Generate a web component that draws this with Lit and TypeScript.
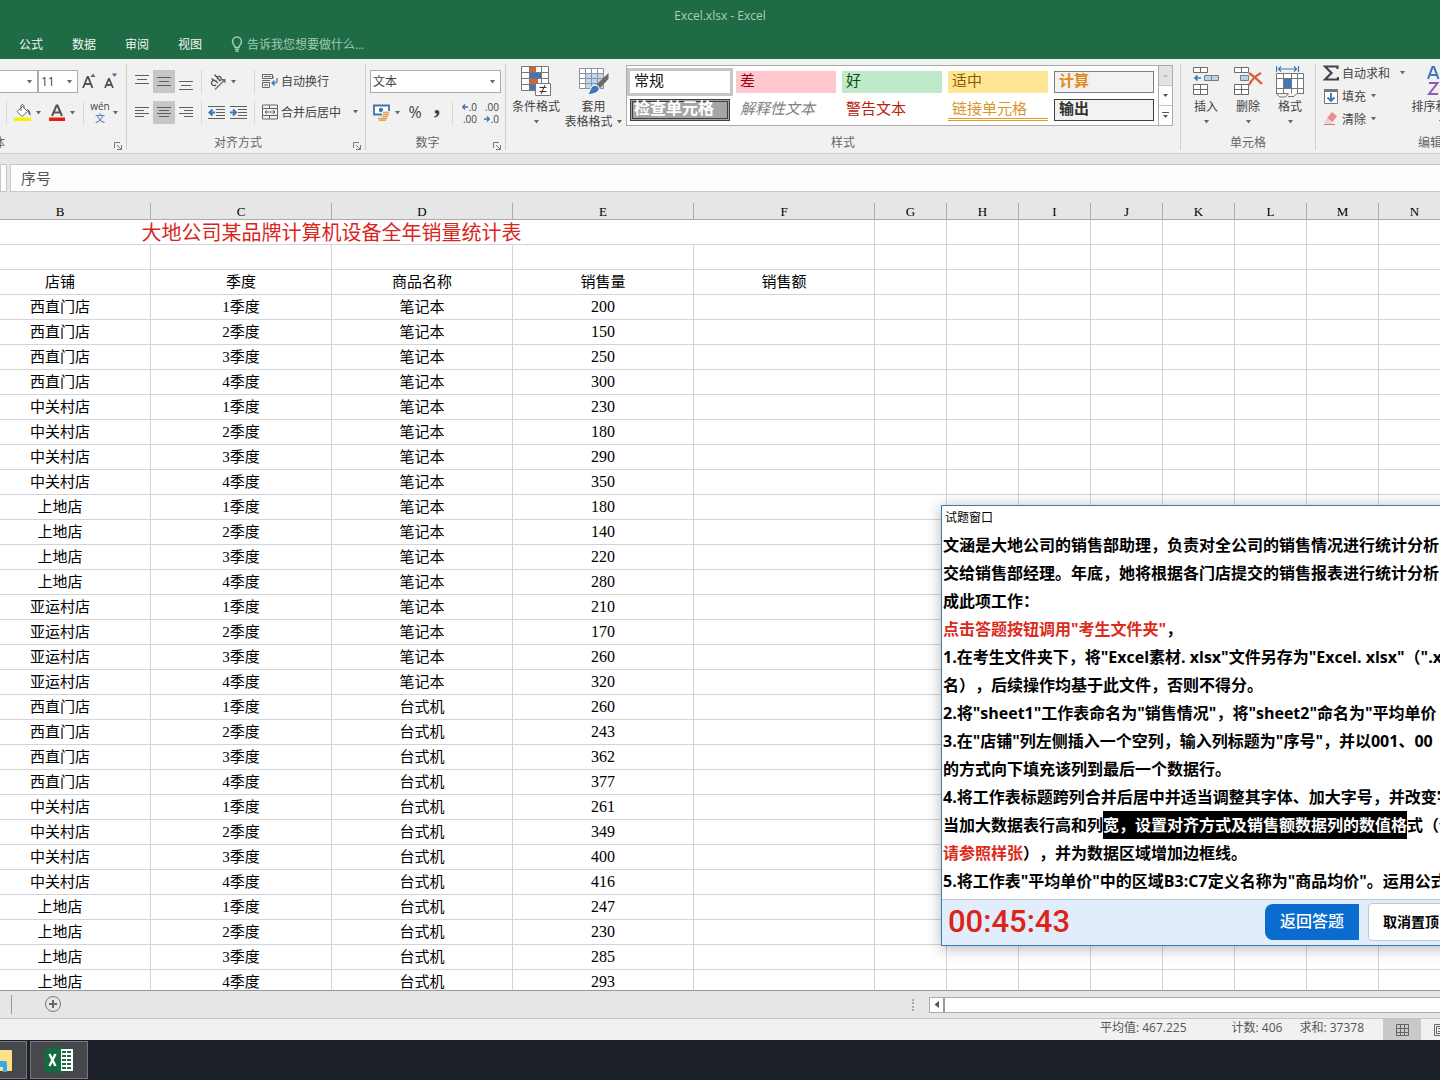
import { LitElement, html, css, svg, nothing } from "lit";
import { customElement } from "lit/decorators.js";
import { classMap } from "lit/directives/class-map.js";

const NAMES = ["B", "C", "D", "E", "F", "G", "H", "I", "J", "K", "L", "M", "N"];
const EXTRA = ["G", "H", "I", "J", "K", "L", "M", "N"];

const SHOPS = ["西直门店", "中关村店", "上地店", "亚运村店"];
const NOTEBOOK = [200, 150, 250, 300, 230, 180, 290, 350, 180, 140, 220, 280, 210, 170, 260, 320];
const DESKTOP = [260, 243, 362, 377, 261, 349, 400, 416, 247, 230, 285, 293];

const toRows = (product: string, amounts: number[]) =>
  amounts.map((n, i) => [SHOPS[Math.floor(i / 4)], `${(i % 4) + 1}季度`, product, String(n), ""]);

const ROWS: string[][] = [...toRows("笔记本", NOTEBOOK), ...toRows("台式机", DESKTOP)];

const STYLES = [
  ["常规", "normal"],
  ["差", "bad"],
  ["好", "good"],
  ["适中", "neutral"],
  ["计算", "calc"],
  ["检查单元格", "check"],
  ["解释性文本", "explain"],
  ["警告文本", "warn"],
  ["链接单元格", "linked"],
  ["输出", "output"],
];

const icon = (w: number, h: number, body: unknown) =>
  html`<svg width=${w} height=${h} viewBox="0 0 ${w} ${h}" fill="none" aria-hidden="true">${body}</svg>`;

const caret = html`<svg class="caret" width="7" height="4" viewBox="0 0 7 4" aria-hidden="true"><path d="M1 0h5L3.500 3.500z" fill="#666" /></svg>`;

const lines = (rows: number[][]) =>
  svg`<path d=${rows.map(([x1, x2, y]) => `M${x1} ${y}.5H${x2}`).join("")} stroke="#5f5f5f" />`;

const I = {
  bulb: icon(12, 16, svg`<path d="M4 11.500C4 9 1.500 8.500 1.500 5.500a4.500 4.500 0 0 1 9 0C10.500 8.500 8 9 8 11.500zM4 13.500h4M4.500 15.500h3" stroke="#a3cab4" stroke-width="1.500" />`),
  grow: icon(16, 18, svg`<path d="M2 15L6.500 4h.6L11.500 15M3.600 11h6.200" stroke="#555" stroke-width="1.900" /><path d="M9.500 4h5L12 .5z" fill="#41719c" />`),
  shrink: icon(16, 18, svg`<path d="M2 15L5.700 6h.5L10 15M3.300 12h5.200" stroke="#555" stroke-width="1.800" /><path d="M9 .5h5L11.500 4z" fill="#41719c" />`),
  bucket: icon(18, 18, svg`<path d="M0 13.500h17v3.500H0z" fill="#ffee00" /><path d="M3 7.500L8.500 2.500l5 5L8 12.500z" fill="#fff" stroke="#666" /><path d="M7 7V1.500q1.500-2 3 0V4" stroke="#666" /><path d="M13 5q4 1 3.500 6.500Q14.500 11 14 7.500z" fill="#4a6f9c" />`),
  fontColor: icon(18, 18, svg`<path d="M4 12L8.500 1.500h1L14 12M5.800 8.500h6.400" stroke="#555" stroke-width="2" /><path d="M1 13.500h16v3.500H1z" fill="#e2200f" />`),
  top: icon(14, 16, lines([[0, 14, 1], [2, 12, 5], [0, 14, 9]])),
  mid: icon(14, 16, lines([[0, 14, 3], [2, 12, 7], [0, 14, 11]])),
  bottom: icon(14, 16, lines([[0, 14, 7], [2, 12, 11], [0, 14, 15]])),
  left: icon(14, 16, lines([[0, 14, 2], [0, 9, 5], [0, 14, 8], [0, 9, 11]])),
  center: icon(14, 16, lines([[0, 14, 2], [2, 12, 5], [0, 14, 8], [2, 12, 11]])),
  right: icon(14, 16, lines([[0, 14, 2], [5, 14, 5], [0, 14, 8], [5, 14, 11]])),
  orient: icon(18, 18, svg`<path d="M6.500 7.500l2.200 2.500M6 7.500a2.600 2.600 0 1 0 1 4.200M6.800 8.500L2.500 5.500M5.500 1.500l5.500 6.500M8 4.500a2.300 2.300 0 1 1 3 3.300" stroke="#555" stroke-width="1.300" /><path d="M6 16.500L15 7.500" stroke="#777" stroke-width="1.400" /><path d="M12 6h4.500v4.500z" fill="#666" />`),
  outdent: icon(18, 16, svg`${lines([[0, 17, 1], [8, 17, 4], [8, 17, 7], [8, 17, 10], [0, 17, 13]])}<path d="M7 7.500H2M4.500 4.500l-3 3 3 3" stroke="#3d76b5" stroke-width="2" />`),
  indent: icon(18, 16, svg`${lines([[0, 17, 1], [8, 17, 4], [8, 17, 7], [8, 17, 10], [0, 17, 13]])}<path d="M0 7.500H5M3 4.500l3 3-3 3" stroke="#3d76b5" stroke-width="2" />`),
  wrap: icon(16, 16, svg`<path d="M.5 1.500h10v4H.5zM.5 9.500h7v5H.5zM0 7.500h8M2 3.500h7M2 12h4" stroke="#666" /><path d="M10 4.500h2M15 5v3.500q0 1.500-2 1.500h-3M12.500 7.500l-2.500 2.500 2.500 2.500" stroke="#3d76b5" stroke-width="1.300" />`),
  merge: icon(16, 16, svg`<path d="M.5 1h15v14H.5zM.5 4.500h15M.5 11.500h15M7.500 1v3.500M7.500 11.500V15" stroke="#666" /><path d="M3 8h10M5 6L3 8l2 2M11 6l2 2-2 2" stroke="#4f6b88" />`),
  money: icon(18, 17, svg`<path d="M1 1.500h15v9H1z" fill="#fff" stroke="#3f74ad" stroke-width="1.800" /><circle cx="8" cy="6" r="2.200" fill="#3f74ad" /><path d="M9 7h8v10H5v-4h4z" fill="#f1f1f1" /><path d="M10 8.500h6M10 10.500h6M9 12.500h6M5 14.500h9M6 16.300h7" stroke="#e6a55a" stroke-width="1.400" />`),
  condFmt: icon(30, 30, svg`<path d="M1 1h27v24H1z" fill="#fff" /><path d="M9 1h6v6H9zM9 13h8v6H9z" fill="#d0643c" /><path d="M9 7h11v6H9zM9 19h5v6H9z" fill="#4278b5" /><path d="M.5.5h27v24H.5zM.5 6.500h27M.5 12.500h27M.5 18.500h27M8.500.5v24M20.500.5v24" stroke="#777" /><path d="M14.500 17.500h15v12h-15z" fill="#fff" stroke="#777" /><path d="M18.500 21.500h7M18.500 25.500h7M24 19l-4 9" stroke="#333" />`),
  tableFmt: icon(30, 30, svg`<path d="M1 2h24v21H1z" fill="#fff" /><path d="M7 7h18v16H7z" fill="#c3d5ea" /><path d="M.5 2.500h24v20H.5zM.5 7.500h24M.5 12.500h24M.5 17.500h24M6.500 2.500v20M12.500 2.500v20M18.500 2.500v20" stroke="#8a94a0" /><path d="M29.500 7v6L21 22l-4-3z" fill="#6b6b6b" /><path d="M16 19q4 0 4.500 4Q18 29 7 28.500q4-1.500 4-4.500 1-4.500 5-5z" fill="#3f78b8" stroke="#fff" />`),
  insert: icon(28, 30, svg`<path d="M1.500 1.500h14v5h-14zM8.500 1.500v5M1.500 18.500h14v10h-14zM8.500 18.500v10M1.500 23.500h14" fill="#fff" stroke="#6b6b6b" /><path d="M12.500 9.500h14v5h-14zM19.500 9.500v5" fill="#bcd3e6" stroke="#6b7f90" /><path d="M9 12H3M5.500 9.500L3 12l2.500 2.500" stroke="#3d76b5" stroke-width="1.700" />`),
  remove: icon(30, 30, svg`<path d="M1.500 1.500h14v5h-14zM8.500 1.500v5M1.500 18.500h14v10h-14zM8.500 18.500v10M1.500 23.500h14" fill="#fff" stroke="#6b6b6b" /><path d="M7.500 9.500h8v5h-8z" fill="#bcd3e6" stroke="#6b7f90" /><path d="M16 7q6 4 13 11M28 7q-8 4-12 12" stroke="#d9603b" stroke-width="2.400" />`),
  format: icon(28, 32, svg`<path d="M.5 7.500h27v20H.5z" fill="#fff" /><path d="M.5 28V7.500h27V28M.5 12.500h27M.5 22.500h27M7.500 7.500v20M15.500 7.500v20M21.500 7.500v20M.5 27.500l3 3.500h6l3-3.500h-12M12 30.500h6l3-3h6.500" stroke="#777" /><path d="M8 13h7v9H8z" fill="#3f78b8" /><path d="M.5 0v6M22.500 0v6M2 3h19M5 .5L2.500 3 5 5.500M18 .5L20.500 3 18 5.500" stroke="#3d76b5" stroke-width="1.200" />`),
  sigma: icon(16, 16, svg`<path d="M14.500 4V1.500H2L8.500 8 2 14.500h13V12" stroke="#444" stroke-width="2.200" />`),
  fill: icon(16, 16, svg`<path d="M1.500 1.500h13v14h-13z" fill="#fff" stroke="#777" /><path d="M1 1h14v3H1z" fill="#777" /><path d="M8 5v8M4.500 9.500L8 13l3.500-3.500" stroke="#3d76b5" stroke-width="1.900" />`),
  eraser: icon(16, 16, svg`<path d="M9 1l5 4-4.500 6-5.500-4z" fill="#e88d93" /><path d="M4 7l5.500 4-1.500 2H2.500L1 11z" fill="#f6d0d0" /><path d="M1 13.500h11" stroke="#b98383" />`),
  sort: icon(30, 30, svg`<path d="M1 13L5.500 1h1.500L11.500 13M2.800 9h7" stroke="#4277b6" stroke-width="2.100" /><path d="M2 17h8.500L2 28h9" stroke="#8e5bb4" stroke-width="2" /><path d="M20 4v22M15.500 21.500l4.500 4.500 4.500-4.500" stroke="#666" stroke-width="1.600" />`),
  launcher: icon(8, 8, svg`<path d="M.5 6V.5H6M3 3l4 4M7.500 3v4.500H3" stroke="#777" />`),
  plus: icon(18, 18, svg`<circle cx="9" cy="9" r="7.500" stroke="#777" /><path d="M9 5v8M5 9h8" stroke="#666" stroke-width="2" />`),
  gridView: icon(14, 14, svg`<path d="M1.500 1.500h12v11h-12zM1.500 5.500h12M1.500 9.500h12M5.500 1.500v11M9.500 1.500v11" stroke="#666" />`),
  pageView: icon(14, 14, svg`<path d="M1.500 1.500h11v11h-11zM3.500 3.500h7v7h-7zM5 5.500h4M5 8.500h4" stroke="#666" />`),
  folder: icon(13, 26, svg`<path d="M0 3h11q1 0 1 1v19q0 1-1 1H0z" fill="#ffe08a" /><path d="M0 14h5q2 0 2 2v9H3v-5H0z" fill="#35a8e8" />`),
  excel: icon(30, 28, svg`<path d="M17 3h12v22H17z" fill="#fff" /><path d="M18 5h4v2h-4zM18 9h4v2h-4zM18 13h4v2h-4zM18 17h4v2h-4zM18 21h4v2h-4zM23 5h4v2h-4zM23 9h4v2h-4zM23 13h4v2h-4zM23 17h4v2h-4zM23 21h4v2h-4z" fill="#1c6b43" /><path d="M0 3L17 0v28L0 25z" fill="#17693f" /><path d="M5.500 8l6 12M11.500 8l-6 12" stroke="#fff" stroke-width="2.300" />`),
};

const BACK = svg`<path d="M6 3H1M3 .5L.8 3 3 5.500" stroke="#3d76b5" stroke-width="1.400" />`;
const FORTH = svg`<path d="M0 3h5M3 .5L5.200 3 3 5.500" stroke="#3d76b5" stroke-width="1.400" />`;

@customElement("app-root")
export class AppRoot extends LitElement {
  static styles = css`
    :host {
      display: block;
      --ui: "Open Sans", "Noto Sans", "Noto Sans CJK SC", sans-serif;
      font-family: var(--ui);
      font-size: 12px;
      color: #444;
    }
    * { box-sizing: border-box; }
    button, input, select {
      font: inherit;
      color: inherit;
      margin: 0;
      padding: 0;
      border: 0;
      border-radius: 0;
      background: none;
      appearance: none;
      outline: none;
    }
    svg { display: block; flex: none; }
    .app {
      position: relative;
      display: flex;
      flex-direction: column;
      height: 100vh;
      overflow: hidden;
      background: #e6e6e6;
    }
    .top { background: #1e6b46; flex: none; }
    .title {
      height: 32px;
      line-height: 32px;
      text-align: center;
      color: #a9cfba;
      font-size: 12px;
      font-weight: 400;
      margin: 0;
    }
    .tabs {
      display: flex;
      align-items: center;
      height: 27px;
      padding: 0 0 3px 19px;
      gap: 29px;
      color: #f0f7f3;
    }
    .tabs a { color: inherit; text-decoration: none; }
    .tell { display: flex; align-items: center; gap: 4px; }
    .tell input { width: 160px; height: 20px; }
    .tell input::placeholder { color: #a3cab4; opacity: 1; }

    .ribbon {
      display: flex;
      flex: none;
      padding: 5px 0 3px;
      background: #f1f1f1;
      border-bottom: 1px solid #d2d2d2;
      overflow: hidden;
    }
    .group {
      display: flex;
      flex-direction: column;
      flex: none;
      border-right: 1px solid #d0d0d0;
    }
    .group.wide { width: 228px; border: 0; }
    .group.font { width: 127px; }
    .group.align { width: 239px; }
    .group.number { width: 140px; }
    .group.styles { width: 675px; }
    .group.cells { width: 135px; }
    .body { height: 71px; display: flex; }
    .rows { display: flex; flex-direction: column; gap: 8px; padding-top: 6px; flex: 1; }
    .row { display: flex; align-items: center; height: 23px; }
    .inset { padding-left: 4px; }
    .inset.tight { padding-left: 2px; }
    .caption { display: flex; height: 15px; line-height: 16px; color: #666; }
    .caption span { flex: 1; text-align: center; white-space: nowrap; }
    .font .caption span { text-align: left; margin-left: -19px; }
    .launch { width: 16px; display: flex; align-items: flex-end; justify-content: center; padding-right: 1px; }
    .sep { width: 1px; height: 23px; background: #d6d6d6; margin: 0 4px; flex: none; }
    .btn { display: flex; align-items: center; justify-content: center; width: 22px; height: 23px; flex: none; }
    .btn.on { background: #c6c6c6; }
    .split { display: flex; align-items: center; gap: 3px; width: 34px; height: 23px; padding-left: 3px; flex: none; }
    .split.far { width: 44px; }
    .text { display: flex; align-items: center; gap: 3px; height: 23px; padding: 0 0 2px 3px; white-space: nowrap; }
    .text .caret { margin-left: 8px; }
    .wen { display: flex; flex-direction: column; align-items: center; width: 18px; font-size: 10px; line-height: 10px; }
    .wen b { color: #3d76b5; font-weight: 400; line-height: 14px; }
    .percent { font-size: 16px; padding-bottom: 1px; }
    .comma { font-family: "Liberation Serif", serif; font-size: 26px; font-weight: 700; line-height: 12px; padding-bottom: 14px; }
    .dec { flex-direction: column; font-size: 10px; line-height: 12px; align-items: flex-end; padding-right: 2px; }
    .dec span { display: flex; align-items: center; gap: 1px; }
    .pick { position: relative; display: flex; align-items: center; height: 23px; background: #fff; border: 1px solid #ababab; }
    .pick select { width: 100%; height: 21px; padding: 0 2px; color: #444; }
    .pick .caret { position: absolute; right: 4px; top: 9px; pointer-events: none; }
    .pick.face { width: 38px; border-left: 0; }
    .pick.size { width: 40px; }
    .pick.kind { width: 131px; }

    .big { display: flex; flex-direction: column; align-items: center; width: 42px; line-height: 15px; white-space: nowrap; padding-top: 2px; }
    .big .pic { height: 33px; display: flex; align-items: flex-start; }
    .big .last { display: flex; align-items: center; gap: 3px; height: 15px; }
    .big.w1 { width: 54px; }
    .big.w2 { width: 61px; }
    .styles .body { padding-left: 3px; }
    .cells .body { padding-left: 4px; }
    .gallery {
      display: flex;
      height: 61px;
      margin: 1px 0 0 2px;
      border: 1px solid #ababab;
      background: #fff;
    }
    .swatches {
      display: grid;
      grid-template-columns: repeat(5, 100px);
      grid-auto-rows: 22px;
      gap: 6px;
      padding: 5px 4px 4px 3px;
    }
    .sw { font-size: 15px; line-height: 18px; text-align: left; padding: 0 4px 4px; color: #111; white-space: nowrap; }
    .normal { outline: 3px solid #c6c6c6; }
    .bad { background: #ffc7ce; color: #9c0006; }
    .good { background: #c0e9ca; color: #06500c; }
    .neutral { background: #ffe694; color: #8a5a00; }
    .calc { background: #f2f2f2; border: 1px solid #7f7f7f; color: #e08a1c; font-weight: 700; line-height: 16px; }
    .check { background: #a5a5a5; border: 3px double #3f3f3f; color: #fff; font-weight: 700; line-height: 12px; padding: 0 1px 4px; font-size: 16px; }
    .explain { color: #7f7f7f; font-style: italic; }
    .warn { color: #b8200f; }
    .linked { color: #d9962e; border-bottom: 3px double #e09a2a; padding-bottom: 1px; }
    .output { background: #f2f2f2; border: 1px solid #3f3f3f; color: #333; font-weight: 700; line-height: 16px; }
    .scroll { display: flex; flex-direction: column; width: 14px; border-left: 1px solid #ababab; }
    .scroll button { flex: 1; display: flex; align-items: center; justify-content: center; border-bottom: 1px solid #c6c6c6; }
    .scroll button:first-child { background: #e3e3e3; }
    .scroll button:last-child { border: 0; }
    .stack { display: flex; flex-direction: column; gap: 5px; width: 95px; padding-left: 4px; }
    .stack .text { height: 18px; padding-bottom: 0; }
    .stack .text .caret { margin-left: 1px; }
    .stack .text.gap .caret { margin-left: 6px; }

    .formula { display: flex; flex: none; gap: 3px; height: 38px; padding-top: 10px; }
    .formula input { height: 28px; background: #fdfdfd; border: 1px solid #c9c9c9; }
    .name { width: 7px; border-left: 0; }
    .formula .fx { flex: 1; padding: 0 10px 2px; font-size: 15px; color: #555; border-right: 0; }

    .sheet { flex: 1; min-height: 0; overflow: hidden; background: #fff; }
    table {
      table-layout: fixed;
      width: 1662px;
      margin-left: -211px;
      border-collapse: separate;
      border-spacing: 0;
      font-family: "Liberation Serif", "Noto Sans CJK SC", serif;
      font-size: 15px;
      color: #000;
    }
    .c1 { width: 181px; }
    .c2 { width: 72px; }
    th, td {
      height: 25px;
      padding: 0;
      line-height: 24px;
      text-align: center;
      font-weight: 400;
      white-space: nowrap;
      border-right: 1px solid #d4d4d4;
      border-bottom: 1px solid #d4d4d4;
    }
    thead th {
      height: 28px;
      padding-top: 13px;
      line-height: 14px;
      font-size: 13px;
      background: #e6e6e6;
      border-right: 1px solid;
      border-image: linear-gradient(#e6e6e6 40%, #ababab 40%) 1;
      border-bottom: 1px solid #999;
    }
    .banner { font-size: 20px; line-height: 22px; padding-top: 2px; color: #d8261c; }
    .num { font-size: 16px; }

    .bottom { display: flex; align-items: center; flex: none; height: 28px; border-top: 1px solid #999; }
    .tabend { width: 12px; height: 19px; border-right: 1px solid #999; }
    .add { margin-left: 32px; padding-bottom: 1px; }
    .dots { margin-left: auto; width: 2px; height: 12px; border-left: 2px dotted #aaa; }
    .hscroll { display: flex; width: 511px; height: 16px; margin-left: 15px; border: 1px solid #ababab; border-right: 0; background: #fff; }
    .hscroll button { width: 15px; display: flex; align-items: center; justify-content: center; border-right: 2px solid #999; }

    .status {
      display: flex;
      justify-content: flex-end;
      align-items: stretch;
      flex: none;
      height: 22px;
      line-height: 18px;
      margin-right: -19px;
      background: #f1f1f1;
      border-top: 1px solid #c3c3c3;
      color: #555;
      white-space: nowrap;
    }
    .avg { margin-right: 45px; }
    .cnt { margin-right: 17px; }
    .view { display: flex; align-items: center; justify-content: center; width: 38px; }
    .view.on { background: #c9c9c9; margin-left: 19px; }

    .taskbar { display: flex; flex: none; gap: 3px; height: 40px; padding: 1px 0; background: #1d222a; }
    .task { display: flex; align-items: center; background: #46484c; border: 1px solid #76787b; }
    .task.files { width: 27px; border-left: 0; }
    .task.xl { width: 58px; justify-content: center; }

    .exam {
      position: absolute;
      left: 941px;
      top: 505px;
      width: 620px;
      background: #fff;
      border: 1px solid #2f7fc0;
      box-shadow: 0 2px 14px rgba(0, 0, 0, 0.3);
      color: #000;
    }
    .exam h2 { margin: 0; padding-left: 3px; height: 25px; line-height: 23px; font-size: 12px; font-weight: 400; }
    .question {
      padding: 0 0 4px 1px;
      font-size: 16px;
      font-weight: 700;
      line-height: 28px;
      white-space: nowrap;
      text-spacing-trim: space-all;
    }
    .question p { margin: 0; height: 28px; }
    .red { color: #dc2a1b; }
    .sel { display: inline-block; height: 28px; background: #000; color: #fff; }
    .foot { display: flex; align-items: center; height: 46px; padding: 0 0 2px 6px; background: #e2edfc; border-top: 1px solid #b9c6da; }
    .timer { width: 317px; font-family: Roboto, "Liberation Sans", sans-serif; font-weight: 500; font-size: 31px; line-height: 42px; color: #dc2418; }
    .back { width: 94px; height: 36px; padding-bottom: 4px; border-radius: 8px 0 0 8px; background: #0a6cce; color: #fff; font-size: 16px; font-weight: 500; }
    .pin { width: 86px; height: 38px; margin-left: 9px; padding-bottom: 2px; border: 1px solid #c3c8d0; border-radius: 4px; background: #fff; font-size: 14px; font-weight: 700; }
  `;

  private caption(text: string, launcher = true) {
    return html`<div class="caption">
      <span>${text}</span>
      ${launcher ? html`<button class="launch" aria-label="${text}设置">${I.launcher}</button>` : nothing}
    </div>`;
  }

  private btn(pic: unknown, label: string, on = false) {
    return html`<button class=${classMap({ btn: true, on })} aria-label=${label}>${pic}</button>`;
  }

  private split(pic: unknown, label: string, far = false) {
    return html`<button class=${classMap({ split: true, far })} aria-label=${label}>${pic}${caret}</button>`;
  }

  private big(pic: unknown, label: string, width = "") {
    return html`<button class="big ${width}">
      <span class="pic">${pic}</span><span>${label}</span><span class="last">${caret}</span>
    </button>`;
  }

  private renderRibbon() {
    return html`<div class="ribbon">
      <section class="group font">
        <div class="body"><div class="rows">
          <div class="row">
            <div class="pick face"><select aria-label="字体"></select>${caret}</div>
            <div class="pick size"><select aria-label="字号"><option>11</option></select>${caret}</div>
            ${this.btn(I.grow, "增大字号")}${this.btn(I.shrink, "减小字号")}
          </div>
          <div class="row inset tight">
            <i class="sep"></i>
            ${this.split(I.bucket, "填充颜色")}${this.split(I.fontColor, "字体颜色")}
            <i class="sep"></i>
            ${this.split(html`<span class="wen">wén<b>文</b></span>`, "拼音")}
          </div>
        </div></div>
        ${this.caption("字体")}
      </section>
      <section class="group align">
        <div class="body"><div class="rows">
          <div class="row inset">
            ${this.btn(I.top, "顶端对齐")}${this.btn(I.mid, "垂直居中", true)}${this.btn(I.bottom, "底端对齐")}
            <i class="sep"></i>
            ${this.split(I.orient, "方向", true)}
            <i class="sep"></i>
            <button class="text">${I.wrap}自动换行</button>
          </div>
          <div class="row inset">
            ${this.btn(I.left, "左对齐")}${this.btn(I.center, "居中", true)}${this.btn(I.right, "右对齐")}
            <i class="sep"></i>
            ${this.btn(I.outdent, "减少缩进量")}${this.btn(I.indent, "增加缩进量")}
            <i class="sep"></i>
            <button class="text">${I.merge}合并后居中${caret}</button>
          </div>
        </div></div>
        ${this.caption("对齐方式")}
      </section>
      <section class="group number">
        <div class="body"><div class="rows">
          <div class="row inset">
            <div class="pick kind"><select aria-label="数字格式"><option>文本</option></select>${caret}</div>
          </div>
          <div class="row inset">
            ${this.split(I.money, "会计数字格式")}
            <button class="btn percent">%</button>
            <button class="btn comma">,</button>
            <i class="sep"></i>
            <button class="btn dec"><span>${icon(6, 6, BACK)}.0</span><span>.00</span></button>
            <button class="btn dec"><span>.00</span><span>${icon(6, 6, FORTH)}.0</span></button>
          </div>
        </div></div>
        ${this.caption("数字")}
      </section>
      <section class="group styles">
        <div class="body">
          ${this.big(I.condFmt, "条件格式", "w1")}
          <button class="big w2">
            <span class="pic">${I.tableFmt}</span><span>套用</span><span class="last">表格格式 ${caret}</span>
          </button>
          <div class="gallery">
            <div class="swatches">
              ${STYLES.map(([name, kind]) => html`<button class="sw ${kind}">${name}</button>`)}
            </div>
            <div class="scroll">
              <button aria-label="上一行">${icon(5, 3, svg`<path d="M0 3h5L2.500 0z" fill="#bbb" />`)}</button>
              <button aria-label="下一行">${icon(5, 3, svg`<path d="M0 0h5L2.500 3z" fill="#555" />`)}</button>
              <button aria-label="更多样式">${icon(7, 7, svg`<path d="M0 .5h7" stroke="#555" /><path d="M1 3h5L3.500 6z" fill="#555" />`)}</button>
            </div>
          </div>
        </div>
        ${this.caption("样式", false)}
      </section>
      <section class="group cells">
        <div class="body">
          ${this.big(I.insert, "插入")}${this.big(I.remove, "删除")}${this.big(I.format, "格式")}
        </div>
        ${this.caption("单元格", false)}
      </section>
      <section class="group wide">
        <div class="body">
          <div class="stack">
            <button class="text gap">${I.sigma}自动求和${caret}</button>
            <button class="text">${I.fill}填充${caret}</button>
            <button class="text">${I.eraser}清除${caret}</button>
          </div>
          ${this.big(I.sort, "排序和筛选", "w2")}
        </div>
        ${this.caption("编辑", false)}
      </section>
    </div>`;
  }

  private renderSheet() {
    const extra = EXTRA.map(() => html`<td></td>`);
    return html`<div class="sheet">
      <table>
        <colgroup>
          <col class="c1" span="6" />
          <col class="c2" span="8" />
        </colgroup>
        <thead>
          <tr><th></th>${NAMES.map((n) => html`<th scope="col">${n}</th>`)}</tr>
        </thead>
        <tbody>
          <tr><td class="banner" colspan="6">大地公司某品牌计算机设备全年销量统计表</td>${extra}</tr>
          <tr><td></td>${NAMES.map(() => html`<td></td>`)}</tr>
          <tr>
            <td></td>
            ${["店铺", "季度", "商品名称", "销售量", "销售额"].map((t) => html`<td>${t}</td>`)}${extra}
          </tr>
          ${ROWS.map(
            (row) => html`<tr>
              <td></td>
              ${row.map((t, i) => html`<td class=${classMap({ num: i === 3 })}>${t}</td>`)}${extra}
            </tr>`
          )}
        </tbody>
      </table>
    </div>`;
  }

  private renderExam() {
    return html`<section class="exam">
      <h2>试题窗口</h2>
      <div class="question">
        <p>文涵是大地公司的销售部助理，负责对全公司的销售情况进行统计分析</p>
        <p>交给销售部经理。年底，她将根据各门店提交的销售报表进行统计分析</p>
        <p>成此项工作：</p>
        <p><span class="red">点击答题按钮调用"考生文件夹"</span>，</p>
        <p>1.在考生文件夹下，将"Excel素材. xlsx"文件另存为"Excel. xlsx"（".x</p>
        <p>名），后续操作均基于此文件，否则不得分。</p>
        <p>2.将"sheet1"工作表命名为"销售情况"，将"sheet2"命名为"平均单价</p>
        <p>3.在"店铺"列左侧插入一个空列，输入列标题为"序号"，并以001、00</p>
        <p>的方式向下填充该列到最后一个数据行。</p>
        <p>4.将工作表标题跨列合并后居中并适当调整其字体、加大字号，并改变字</p>
        <p>当加大数据表行高和列<span class="sel">宽，设置对齐方式及销售额数据列的数值格</span>式（保</p>
        <p><span class="red">请参照样张</span>），并为数据区域增加边框线。</p>
        <p>5.将工作表"平均单价"中的区域B3:C7定义名称为"商品均价"。运用公式</p>
      </div>
      <div class="foot">
        <time class="timer">00:45:43</time>
        <button class="back">返回答题</button>
        <button class="pin">取消置顶</button>
      </div>
    </section>`;
  }

  render() {
    return html`<main class="app">
      <header class="top">
        <h1 class="title">Excel.xlsx - Excel</h1>
        <nav class="tabs">
          ${["公式", "数据", "审阅", "视图"].map((t) => html`<a href="#">${t}</a>`)}
          <label class="tell">${I.bulb}<input aria-label="告诉我您想要做什么" placeholder="告诉我您想要做什么..." /></label>
        </nav>
      </header>
      ${this.renderRibbon()}
      <div class="formula">
        <input class="name" aria-label="名称框" />
        <input class="fx" aria-label="编辑栏" value="序号" />
      </div>
      ${this.renderSheet()}
      <div class="bottom">
        <span class="tabend"></span>
        <button class="add" aria-label="新工作表">${I.plus}</button>
        <span class="dots"></span>
        <div class="hscroll">
          <button aria-label="向左滚动">${icon(5, 7, svg`<path d="M5 0v7L.5 3.500z" fill="#555" />`)}</button>
        </div>
      </div>
      <footer class="status">
        <span class="avg">平均值: 467.225</span>
        <span class="cnt">计数: 406</span>
        <span>求和: 37378</span>
        <button class="view on" aria-label="普通">${I.gridView}</button>
        <button class="view" aria-label="页面布局">${I.pageView}</button>
      </footer>
      <div class="taskbar">
        <button class="task files" aria-label="文件资源管理器">${I.folder}</button>
        <button class="task xl" aria-label="Excel">${I.excel}</button>
      </div>
      ${this.renderExam()}
    </main>`;
  }
}
